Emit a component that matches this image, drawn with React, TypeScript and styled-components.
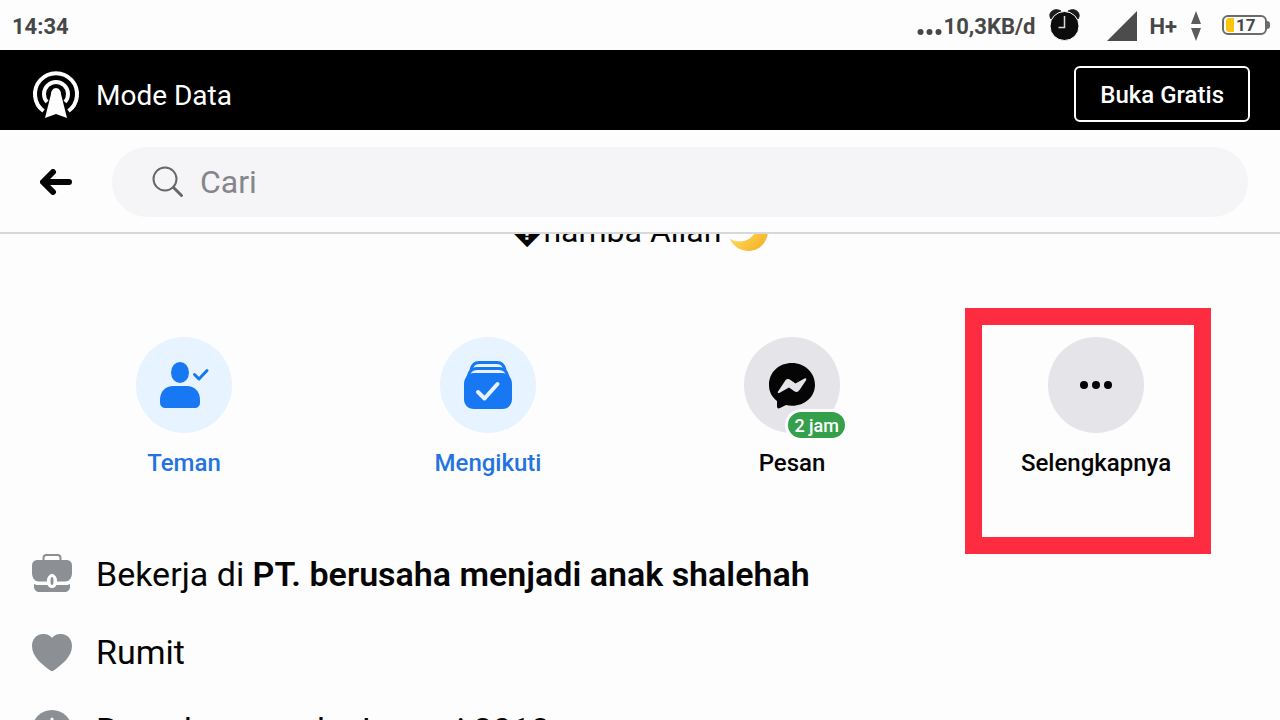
import React from "react";
import styled, { createGlobalStyle, css } from "styled-components";

const Global = createGlobalStyle`
  *, *::before, *::after { box-sizing: border-box; }
  body { margin: 0; background: #fdfdfd; color: #050505; font-family: Roboto, "Noto Sans", sans-serif; }
  button, input { font: inherit; color: inherit; }
  svg { display: block; flex: none; }
`;

const Screen = styled.div`
  display: flex;
  flex-direction: column;
  height: 100vh;
  overflow: hidden;
`;

const StatusBar = styled.header`
  flex: none;
  display: flex;
  align-items: center;
  justify-content: space-between;
  height: 50px;
  padding: 4px 10px 0 12px;
  color: #474747;
  font-size: 22px;
  line-height: 28px;
  font-weight: 700;
`;

const StatusGroup = styled.div`
  display: flex;
  align-items: center;
`;

const Dots = styled.svg`
  margin: 10px 2px 0 0;
`;

const Alarm = styled.svg`
  margin: 0 27px 4px 14px;
`;

const Signal = styled.svg`
  margin: 0 12px 2px 0;
`;

const Arrows = styled.svg`
  margin: 0 21px 2px 14px;
`;

const Battery = styled.div`
  display: flex;
  align-items: center;
  margin-bottom: 4px;
`;

const BatteryCell = styled.span`
  display: flex;
  align-items: center;
  gap: 2px;
  width: 45px;
  height: 20px;
  padding: 0 2px;
  border: 2px solid #6b6b6b;
  border-radius: 6px;
  font-size: 17px;
  line-height: 16px;
`;

const BatteryLevel = styled.i`
  width: 8px;
  height: 14px;
  border-radius: 3px 0 0 3px;
  background: #fcc40c;
`;

const BatteryTip = styled.i`
  width: 3px;
  height: 8px;
  border-radius: 0 3px 3px 0;
  background: #6b6b6b;
`;

const DataBar = styled.section`
  flex: none;
  display: flex;
  align-items: center;
  height: 80px;
  padding: 8px 30px 0 32px;
  background: #000;
  color: #fff;
`;

const DataTitle = styled.span`
  flex: 1;
  margin: 4px 0 0 16px;
  font-size: 28px;
  line-height: 36px;
`;

const OutlineButton = styled.button`
  height: 56px;
  padding: 2px 24px 0;
  border: 2px solid #fff;
  border-radius: 6px;
  background: transparent;
  font-size: 24px;
  font-weight: 500;
  line-height: 32px;
`;

const SearchBar = styled.nav`
  flex: none;
  display: flex;
  align-items: center;
  gap: 40px;
  height: 104px;
  padding: 2px 32px 0 40px;
  border-bottom: 2px solid #d8d8da;
`;

const BackButton = styled.button`
  padding: 0;
  border: 0;
  background: transparent;
`;

const SearchField = styled.label`
  flex: 1;
  display: flex;
  align-items: center;
  gap: 16px;
  height: 70px;
  padding: 0 40px;
  border-radius: 35px;
  background: #f5f5f7;
`;

const SearchInput = styled.input`
  flex: 1;
  min-width: 0;
  padding: 0;
  border: 0;
  outline: 0;
  background: transparent;
  font-size: 32px;
  line-height: 40px;
  &::placeholder { color: #85868b; opacity: 1; }
`;

const Profile = styled.main`
  flex: 1;
  min-height: 0;
  overflow: hidden;
`;

const Bio = styled.p`
  display: flex;
  align-items: flex-end;
  justify-content: center;
  height: 40px;
  margin: -23px 0 0;
  font-size: 32px;
  line-height: 40px;
`;

const Moon = styled.svg`
  margin-left: 8px;
`;

const Actions = styled.div`
  display: grid;
  grid-template-columns: repeat(4, 1fr);
  padding: 86px 32px 75px;
`;

const Action = styled.div`
  position: relative;
  display: flex;
  justify-content: center;
`;

const ActionButton = styled.button<{ $active?: boolean }>`
  display: flex;
  flex-direction: column;
  align-items: center;
  gap: 14px;
  padding: 0;
  border: 0;
  background: transparent;
  font-size: 24px;
  font-weight: 500;
  line-height: 32px;
  ${(p) => p.$active && css`color: #2374e1;`}
`;

const Disc = styled.span<{ $active?: boolean }>`
  position: relative;
  display: flex;
  align-items: center;
  justify-content: center;
  width: 96px;
  height: 96px;
  border-radius: 50%;
  background: ${(p) => (p.$active ? "#e7f3ff" : "#e4e4e9")};
`;

const Badge = styled.span`
  position: absolute;
  right: -8px;
  bottom: -8px;
  padding: 1px 6px 0;
  border: 3px solid #fdfdfd;
  border-radius: 16px;
  background: #35a04b;
  color: #fff;
  font-size: 18px;
  line-height: 25px;
  white-space: nowrap;
`;

const Highlight = styled.i`
  position: absolute;
  top: -29px;
  left: 50%;
  width: 246px;
  height: 246px;
  margin-left: -131px;
  border: 17px solid #fe2c40;
  pointer-events: none;
`;

const Details = styled.ul`
  display: flex;
  flex-direction: column;
  gap: 38px;
  margin: 0;
  padding: 0 32px;
  list-style: none;
`;

const Detail = styled.li`
  display: flex;
  align-items: center;
  gap: 24px;
  font-size: 34px;
  line-height: 40px;
  b { font-weight: 600; }
`;

const FriendIcon = () => (
  <svg width="56" height="56" viewBox="0 0 56 56" fill="#1877f2" aria-hidden="true">
    <ellipse cx="24" cy="15.500" rx="9" ry="10.500" />
    <path d="M4 43C4 34 10 29 17 29h14c7 0 13 5 13 14v2c0 4-2 6-6 6H10c-4 0-6-2-6-6z" />
    <path d="M38.500 17.500l4.500 4.500 8-8.500" fill="none" stroke="#1877f2" strokeWidth="3" strokeLinecap="round" strokeLinejoin="round" />
  </svg>
);

const FollowIcon = () => (
  <svg width="48" height="48" viewBox="0 0 48 48" aria-hidden="true">
    <path d="M7 9C8 4 11 1.500 15 1.500h18C37 1.500 40 4 41 9" fill="none" stroke="#1877f2" strokeWidth="3" />
    <path d="M4 16C5 10 8 7.500 13 7.500h22c5 0 8 2.500 9 8.500" fill="none" stroke="#1877f2" strokeWidth="3" />
    <path d="M10 12h28c6 0 10 5 10 11v15c0 6-4 10-10 10H10C4 48 0 44 0 38V23c0-6 4-11 10-11z" fill="#1877f2" />
    <path d="M14 31l6.500 6.500L33.500 23" fill="none" stroke="#e7f3ff" strokeWidth="4" strokeLinecap="round" strokeLinejoin="round" />
  </svg>
);

const MessengerIcon = () => (
  <svg width="48" height="48" viewBox="0 0 48 48" aria-hidden="true">
    <path d="M24 2C11 2 1 11 1 24c0 7 3 12 8 16v5c0 2 1 3 3 2l6-3c2 .6 4 .8 6 .8 13 0 23-9 23-21S37 2 24 2z" fill="#050505" />
    <path d="M10 30.500l7-10.500c1.500-2.300 3.500-2.500 5.500-1l5 3.600 9-5c1.300-.7 2.400.3 1.600 1.600L31.500 29c-1.500 2.300-3.500 2.500-5.500 1l-5-3.600-9.300 5.300c-1.300.8-2.500 0-1.700-1.200z" fill="#e4e4e9" />
  </svg>
);

const MoreIcon = () => (
  <svg width="32" height="8" viewBox="0 0 32 8" fill="#050505" aria-hidden="true">
    <circle cx="4" cy="4" r="4" />
    <circle cx="16" cy="4" r="4" />
    <circle cx="28" cy="4" r="4" />
  </svg>
);

const WorkIcon = () => (
  <svg width="40" height="40" viewBox="0 0 40 40" aria-hidden="true">
    <path d="M11.500 7V4c0-2 1-3 3-3h11c2 0 3 1 3 3v3" fill="none" stroke="#8c9094" strokeWidth="2" />
    <path d="M6 6h28c4 0 6 2 6 6v7c0 5-3 8.500-7 8.500h-8V27c0-4-2-6.500-5-6.500S15 23 15 27v.5H7c-4 0-7-3.500-7-8.500v-7c0-4 2-6 6-6z" fill="#8c9094" />
    <path d="M2 30c2 1 3 1 5 1h8.500c.8 2 2.400 3 4.500 3s3.700-1 4.500-3H33c2 0 3 0 5-1v2c0 4-2 6-6 6H8c-4 0-6-2-6-6z" fill="#8c9094" />
    <ellipse cx="20" cy="27" rx="3" ry="5.500" fill="none" stroke="#fdfdfd" strokeWidth="3" />
    <ellipse cx="20" cy="27" rx="1.500" ry="4" fill="#8c9094" />
  </svg>
);

const HeartIcon = () => (
  <svg width="40" height="40" viewBox="0 0 40 40" aria-hidden="true">
    <path d="M20 6C17 2.500 14.500 2 11 2 4.500 2 0 7 0 14c0 11 10 18 17.500 24 2 1.500 3 1.500 5 0C30 32 40 25 40 14 40 7 35.500 2 29 2c-3.500 0-6 .5-9 4z" fill="#8c9094" />
  </svg>
);

const ClockIcon = () => (
  <svg width="40" height="40" viewBox="0 0 40 40" aria-hidden="true">
    <circle cx="20" cy="20" r="20" fill="#8c9094" />
    <path d="M20 9v12l7 6" fill="none" stroke="#fdfdfd" strokeWidth="3" strokeLinecap="round" />
  </svg>
);

export default function App() {
  return (
    <Screen>
      <Global />
      <StatusBar>
        <span>14:34</span>
        <StatusGroup>
          <Dots width="25" height="6" viewBox="0 0 25 6" fill="#474747" aria-hidden="true">
            <circle cx="3.500" cy="3" r="3" />
            <circle cx="12.500" cy="3" r="3" />
            <circle cx="21.500" cy="3" r="3" />
          </Dots>
          <span>10,3KB/d</span>
          <Alarm width="31" height="32" viewBox="0 0 31 32" aria-hidden="true">
            <path d="M2 10C-2 4 5-2 12 2zM29 10c4-6-3-12-10-8z" fill="#1c1c1c" stroke="#1c1c1c" strokeLinejoin="round" />
            <circle cx="15.500" cy="17" r="14.500" fill="#0c0c0c" stroke="#fdfdfd" />
            <path d="M15.500 7v11.500h-6" fill="none" stroke="#d8d8d8" strokeWidth="1.500" />
          </Alarm>
          <Signal width="30" height="30" viewBox="0 0 30 30" aria-hidden="true">
            <path d="M30 0v30H0z" fill="#4c4c4c" />
          </Signal>
          <span>H+</span>
          <Arrows width="10" height="30" viewBox="0 0 10 30" fill="#5c5c5c" aria-hidden="true">
            <path d="M5 0l5 13H0zM5 30L0 17h10z" />
          </Arrows>
          <Battery>
            <BatteryCell>
              <BatteryLevel />
              17
            </BatteryCell>
            <BatteryTip />
          </Battery>
        </StatusGroup>
      </StatusBar>

      <DataBar>
        <svg width="48" height="48" viewBox="0 0 48 48" fill="none" stroke="#fff" strokeWidth="4" aria-hidden="true">
          <path d="M11.500 41A21 21 0 1 1 36.500 41" />
          <path d="M15 32A12 12 0 1 1 33 32" />
          <path d="M24 18a5.500 5.500 0 0 1 5 6l6 24-11-4-11 4 6-24a5.500 5.500 0 0 1 5-6z" fill="#fff" stroke="none" />
        </svg>
        <DataTitle>Mode Data</DataTitle>
        <OutlineButton type="button">Buka Gratis</OutlineButton>
      </DataBar>

      <SearchBar>
        <BackButton type="button" aria-label="Kembali">
          <svg width="32" height="26" viewBox="0 0 32 26" fill="none" stroke="#050505" strokeWidth="6" strokeLinecap="round" strokeLinejoin="round" aria-hidden="true">
            <path d="M29 13H4M13 3L3 13l10 10" />
          </svg>
        </BackButton>
        <SearchField>
          <svg width="32" height="32" viewBox="0 0 32 32" fill="none" stroke="#65676b" strokeLinecap="round" aria-hidden="true">
            <circle cx="13" cy="13" r="11.500" strokeWidth="2" />
            <path d="M21.500 21.500l8 8" strokeWidth="3" />
          </svg>
          <SearchInput type="text" placeholder="Cari" aria-label="Cari" />
        </SearchField>
      </SearchBar>

      <Profile>
        <Bio>
          <span>�hamba Allah</span>
          <Moon width="40" height="43" viewBox="0 0 40 43" aria-hidden="true">
            <defs>
              <linearGradient id="moon" x1="0" y1="0" x2="1" y2="1">
                <stop offset="0.4" stopColor="#fdd655" />
                <stop offset="1" stopColor="#f5a81c" />
              </linearGradient>
            </defs>
            <path d="M27 3c8 3 13 10 12 18-1 11-9 19-19 19C11 40 4 35 1 28c10 5 19 2 24-5 4-6 5-13 2-20z" fill="url(#moon)" transform="translate(0 3)" />
          </Moon>
        </Bio>

        <Actions>
          <Action>
            <ActionButton type="button" $active>
              <Disc $active><FriendIcon /></Disc>
              Teman
            </ActionButton>
          </Action>
          <Action>
            <ActionButton type="button" $active>
              <Disc $active><FollowIcon /></Disc>
              Mengikuti
            </ActionButton>
          </Action>
          <Action>
            <ActionButton type="button">
              <Disc>
                <MessengerIcon />
                <Badge>2 jam</Badge>
              </Disc>
              Pesan
            </ActionButton>
          </Action>
          <Action>
            <ActionButton type="button">
              <Disc><MoreIcon /></Disc>
              Selengkapnya
            </ActionButton>
            <Highlight />
          </Action>
        </Actions>

        <Details>
          <Detail>
            <WorkIcon />
            <span>Bekerja di <b>PT. berusaha menjadi anak shalehah</b></span>
          </Detail>
          <Detail>
            <HeartIcon />
            <span>Rumit</span>
          </Detail>
          <Detail>
            <ClockIcon />
            <span>Bergabung pada Januari 2018</span>
          </Detail>
        </Details>
      </Profile>
    </Screen>
  );
}
